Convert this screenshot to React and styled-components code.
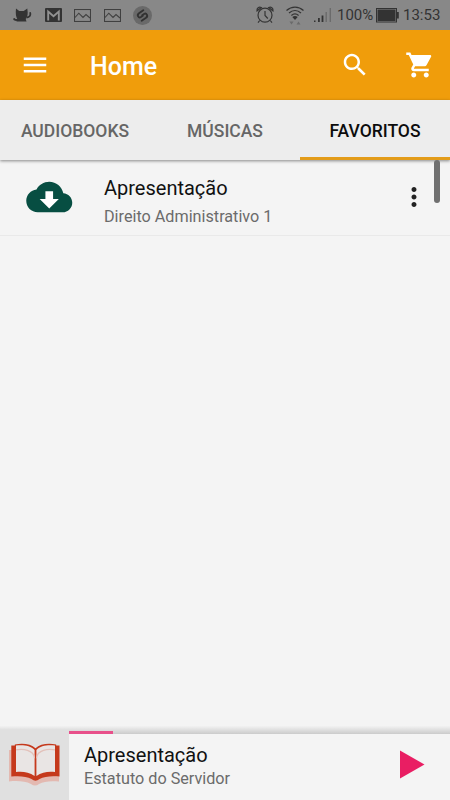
import React from "react";
import styled, { createGlobalStyle } from "styled-components";

const GlobalStyle = createGlobalStyle`
  * {
    box-sizing: border-box;
  }
  body {
    margin: 0;
    background: #f4f4f4;
    font-family: Roboto, "Liberation Sans", sans-serif;
  }
`;

const tabs = ["AUDIOBOOKS", "MÚSICAS", "FAVORITOS"];

const favorites = [
  { id: 1, title: "Apresentação", subtitle: "Direito Administrativo 1" }
];

export default function App() {
  return (
    <Screen>
      <GlobalStyle />
      <StatusBar />
      <AppBar />
      <Tabs active="FAVORITOS" />
      <Content>
        {favorites.map(item => (
          <FavoriteRow key={item.id} item={item} />
        ))}
        <ScrollThumb />
      </Content>
      <Player title="Apresentação" subtitle="Estatuto do Servidor" />
    </Screen>
  );
}

function StatusBar() {
  return (
    <StatusWrapper>
      <StatusGroup>
        {/*cat*/}
        <StatusIcon width="19" height="15" viewBox="0 0 19 15">
          <path d="M3 .5l3.200 2.500h4.500l3.600-2.500.4 4c.1 3-.8 5-2 6.500l.8 2.500H3.500l.8-2.500C3 9 2.400 5.500 3 .5z" />
          <path d="M13.500 9.500c3-.3 4.600-2 3.500-5.300M5 11.500C3 12.500 1.500 12 .8 10.500" fill="none" stroke="#333" strokeWidth="1.800" />
        </StatusIcon>
        {/*gmail*/}
        <StatusIcon width="17" height="14" viewBox="0 0 17 14">
          <rect width="17" height="14" rx="1" />
          <path d="M3.200 12.500V3.500l5.300 4.700 5.300-4.700v9" fill="none" stroke="#929292" strokeWidth="1.900" />
        </StatusIcon>
        <PictureIcon />
        <PictureIcon />
        {/*shazam*/}
        <StatusIcon width="19" height="19" viewBox="0 0 19 19">
          <circle cx="9.500" cy="9.500" r="9.500" fill="#696969" />
          <path
            d="M10.300 4.200L6 7.200c-2.600 2-.4 5.200 2 3.800l1.800-1.200M8.700 14.800l4.300-3c2.600-2 .4-5.200-2-3.800L9.200 9.200"
            fill="none"
            stroke="#323232"
            strokeWidth="1.900"
            strokeLinecap="round"
          />
        </StatusIcon>
      </StatusGroup>
      <StatusGroup $right>
        {/*alarm*/}
        <StatusIcon width="18" height="18" viewBox="0 0 18 18">
          <g fill="none" stroke="#353535" strokeWidth="1.200">
            <circle cx="9" cy="9.200" r="7" />
            <path d="M9 5v4.500l2.800 3M1 4.800C.6 2 3 .5 5.300 1.600zM17 4.800C17.400 2 15 .5 12.700 1.600zM3.700 14.500l-1.700 2.200M14.300 14.500l1.700 2.200" />
          </g>
        </StatusIcon>
        {/*wifi*/}
        <WifiIcon width="18" height="20" viewBox="0 0 18 20">
          <g fill="none" stroke="#353535" strokeWidth="1.300">
            <path d="M.5 5.400c5-4.500 12-4.500 17 0M3 8c3.600-3.200 8.400-3.200 12 0M5.400 10.400c2.200-1.800 5-1.800 7.200 0" />
          </g>
          <path d="M6.300 12c1.700-1.200 3.700-1.200 5.400 0L9 14.900z" />
          <path d="M3.500 16.500h4l-2 3zM10.500 19.500h4l-2-3z" fill="#6b6b6b" />
        </WifiIcon>
        {/*mobile signal*/}
        <SignalIcon width="18" height="15" viewBox="0 0 18 15">
          <path d="M0 12.500h1.500V14H0zM4 10h1.800v4H4zM7.600 7.500h1.800V14H7.600z" />
          <path d="M11.500 4h1.400v10h-1.400zM15.600 0H17v14h-1.400z" fill="#6b6b6b" />
        </SignalIcon>
        <StatusText $width={36}>100%</StatusText>
        {/*battery*/}
        <BatteryIcon width="23" height="15" viewBox="0 0 23 15">
          <rect x=".5" y=".5" width="20" height="13.500" fill="none" stroke="#333" />
          <rect x="1.500" y="1.500" width="18" height="11.500" />
          <rect x="21" y="4" width="1.800" height="6.500" />
        </BatteryIcon>
        <StatusText $width={37}>13:53</StatusText>
      </StatusGroup>
    </StatusWrapper>
  );
}

function PictureIcon() {
  return (
    <StatusIcon width="17" height="13" viewBox="0 0 17 13">
      <g fill="none" stroke="#404040" strokeWidth="1.100">
        <rect x=".5" y=".5" width="16" height="12" />
        <path d="M1 8.500l3.800-4.300 4.200 4.300 3-3L16 9" />
      </g>
    </StatusIcon>
  );
}

function AppBar() {
  return (
    <BarWrapper>
      <MaterialIcon viewBox="0 0 24 24">
        <path d="M3 18h18v-2H3v2zm0-5h18v-2H3v2zm0-7v2h18V6H3z" />
      </MaterialIcon>
      <BarTitle>Home</BarTitle>
      <BarActions>
        <MaterialIcon viewBox="0 0 24 24">
          <path d="M15.500 14h-.79l-.28-.27C15.410 12.590 16 11.110 16 9.500 16 5.910 13.090 3 9.500 3S3 5.910 3 9.500 5.910 16 9.500 16c1.610 0 3.090-.59 4.230-1.570l.27.28v.79l5 4.990L20.490 19l-4.990-5zm-6 0C7.010 14 5 11.990 5 9.500S7.010 5 9.500 5 14 7.010 14 9.500 11.990 14 9.500 14z" />
        </MaterialIcon>
        <MaterialIcon viewBox="0 0 24 24">
          <path d="M7 18c-1.100 0-1.990.9-1.990 2S5.900 22 7 22s2-.9 2-2-.9-2-2-2zM1 2v2h2l3.600 7.590-1.350 2.450c-.16.28-.25.61-.25.96 0 1.100.9 2 2 2h12v-2H7.420c-.14 0-.25-.11-.25-.25l.03-.12.9-1.630h7.450c.75 0 1.410-.41 1.750-1.030l3.580-6.490c.08-.14.12-.31.12-.48 0-.55-.45-1-1-1H5.210l-.94-2H1zm16 16c-1.100 0-1.990.9-1.990 2s.89 2 1.990 2 2-.9 2-2-.9-2-2-2z" />
        </MaterialIcon>
      </BarActions>
    </BarWrapper>
  );
}

function Tabs({ active }) {
  return (
    <TabList>
      {tabs.map(tab => (
        <Tab key={tab} $active={tab === active}>
          {tab}
        </Tab>
      ))}
    </TabList>
  );
}

function FavoriteRow({ item }) {
  return (
    <Row>
      <CloudIcon viewBox="0 0 24 24">
        <path
          d="M19.350 10.040C18.670 6.590 15.640 4 12 4 9.110 4 6.600 5.640 5.350 8.040 2.340 8.360 0 10.910 0 14c0 3.310 2.690 6 6 6h13c2.760 0 5-2.240 5-5 0-2.640-2.050-4.780-4.650-4.960z"
          fill="#074e42"
        />
        <path d="M17 13l-5 5-5-5h3V9h4v4z" fill="#fff" />
      </CloudIcon>
      <RowText>
        <Title>{item.title}</Title>
        <Subtitle>{item.subtitle}</Subtitle>
      </RowText>
      <MoreIcon viewBox="0 0 24 24">
        <path d="M12 8c1.100 0 2-.9 2-2s-.9-2-2-2-2 .9-2 2 .9 2 2 2zm0 2c-1.100 0-2 .9-2 2s.9 2 2 2 2-.9 2-2-.9-2-2-2zm0 6c-1.100 0-2 .9-2 2s.9 2 2 2 2-.9 2-2-.9-2-2-2z" />
      </MoreIcon>
    </Row>
  );
}

function Player({ title, subtitle }) {
  return (
    <PlayerWrapper>
      <Cover>
        {/*open book*/}
        <svg width="52" height="44" viewBox="0 0 52 44">
          <path d="M0 7h4v24l46 2.500v5c-8-.8-15-.4-20 2.500q-4 3-8 0c-6-3-14-3.300-22-2.500z" fill="#e3b9b1" />
          <path
            d="M2.300 2.500h3.500V1.500C14 0 22 1 26.500 5.200 31 1 39 0 47.200 1.500v1h3.300v31c-8-.7-15-.3-20 2.500q-4 3.500-8 0c-5-2.800-12-3.200-20.200-2.500z"
            fill="#c5391c"
          />
          <path d="M7 2.600c7-1 14.500 0 18.600 4.400V33C20 28.700 13 28.200 7 28.900z" fill="#e9e5e4" />
          <path d="M46 2.600c-7-1-14.500 0-18.600 4.400V33C33 28.700 40 28.200 46 28.900z" fill="#e9e5e4" />
          <path
            d="M7 6.800c6-1 12.500-.2 16.500 3.500q1.800 2 2 5M46 6.800c-6-1-12.500-.2-16.500 3.500q-1.800 2-2 5"
            fill="none"
            stroke="#e3c1ba"
            strokeWidth="1.300"
          />
        </svg>
      </Cover>
      <PlayerBody>
        <PlayerText>
          <Title>{title}</Title>
          <Subtitle>{subtitle}</Subtitle>
        </PlayerText>
        <PlayIcon width="25" height="29" viewBox="0 0 25 29">
          <path d="M0 .5v28l24.500-14z" fill="#e91e63" />
        </PlayIcon>
      </PlayerBody>
      <Progress />
    </PlayerWrapper>
  );
}

const Screen = styled.div`
  display: flex;
  flex-direction: column;
  width: 450px;
  height: 800px;
  overflow: hidden;
  background: #f4f4f4;
`;

const StatusWrapper = styled.header`
  display: flex;
  align-items: center;
  justify-content: space-between;
  height: 30px;
  padding: 0 10px 0 13px;
  background: #888;
`;

const StatusGroup = styled.div`
  display: flex;
  align-items: center;
  gap: ${props => (props.$right ? "0" : "12.5px")};
`;

const StatusIcon = styled.svg`
  flex: none;
  fill: #333;
`;

const WifiIcon = styled(StatusIcon)`
  margin: 0 10px 0 12px;
`;

const SignalIcon = styled(StatusIcon)`
  margin-right: 5px;
`;

const BatteryIcon = styled(StatusIcon)`
  margin: 0 4px 0 3px;
`;

const StatusText = styled.span`
  width: ${props => props.$width}px;
  padding-top: 1px;
  color: #333;
  font-size: 15px;
  line-height: 29px;
  white-space: nowrap;
`;

const BarWrapper = styled.div`
  display: flex;
  align-items: center;
  height: 70px;
  padding: 0 15px 0 20px;
  background: #f09d0b;
`;

const MaterialIcon = styled.svg`
  flex: none;
  width: 30px;
  height: 30px;
  fill: #fff;
`;

const BarTitle = styled.h1`
  margin: 0 0 0 40px;
  padding-top: 3px;
  color: #fff;
  font-size: 25px;
  font-weight: 500;
  line-height: 30px;
`;

const BarActions = styled.div`
  display: flex;
  gap: 35px;
  margin-left: auto;
`;

const TabList = styled.nav`
  display: grid;
  grid-template-columns: repeat(3, 150px);
  height: 60px;
  background: #ededed;
  box-shadow: 0 1px 3px rgba(0, 0, 0, 0.45);
  z-index: 1;
`;

const Tab = styled.div`
  height: 60px;
  padding-top: 1px;
  border-bottom: 3px solid ${props => (props.$active ? "#e39c1a" : "transparent")};
  color: ${props => (props.$active ? "#0c0c0c" : "#666")};
  font-size: 17.5px;
  font-weight: 500;
  line-height: 60px;
  text-align: center;
`;

const Content = styled.main`
  position: relative;
  flex: 1;
`;

const Row = styled.div`
  display: flex;
  height: 76px;
  padding: 14px 21px 0 26px;
  border-bottom: 1px solid #e9e9e9;
`;

const CloudIcon = styled.svg`
  flex: none;
  width: 46.5px;
  height: 46px;
`;

const RowText = styled.div`
  flex: 1;
  margin-left: 31.5px;
`;

const Title = styled.div`
  color: #111;
  font-size: 20px;
  line-height: 28px;
`;

const Subtitle = styled.div`
  padding-top: 1px;
  color: #6b6b6b;
  font-size: 16.2px;
  line-height: 28px;
`;

const MoreIcon = styled.svg`
  flex: none;
  width: 30px;
  height: 30px;
  margin-top: 8px;
  fill: #222;
`;

/*sits over the list, at the right edge*/
const ScrollThumb = styled.div`
  position: absolute;
  top: 0;
  right: 10px;
  width: 6px;
  height: 43px;
  border-radius: 3px;
  background: #707070;
  z-index: 2;
`;

const PlayerWrapper = styled.footer`
  position: relative;
  display: flex;
  height: 74px;
  background: linear-gradient(#f2f2f2, #cbcbcb 8px);
`;

const Cover = styled.div`
  width: 69px;
  margin-top: 4px;
  padding: 13px 0 0 9px;
  background: #e0e0e0;
`;

const PlayerBody = styled.div`
  display: flex;
  flex: 1;
  margin-top: 8px;
  padding: 7px 25px 0 15px;
  background: #f4f4f4;
`;

const PlayerText = styled.div`
  flex: 1;
  ${Title} {
    padding-top: 1px;
    line-height: 27px;
  }
  ${Subtitle} {
    padding-top: 0;
    line-height: 20px;
  }
`;

const PlayIcon = styled.svg`
  flex: none;
  margin-top: 9px;
`;

/*playback progress, over the top edge of the player*/
const Progress = styled.div`
  position: absolute;
  top: 5px;
  left: 69px;
  width: 44px;
  height: 3px;
  background: #e8508a;
`;
